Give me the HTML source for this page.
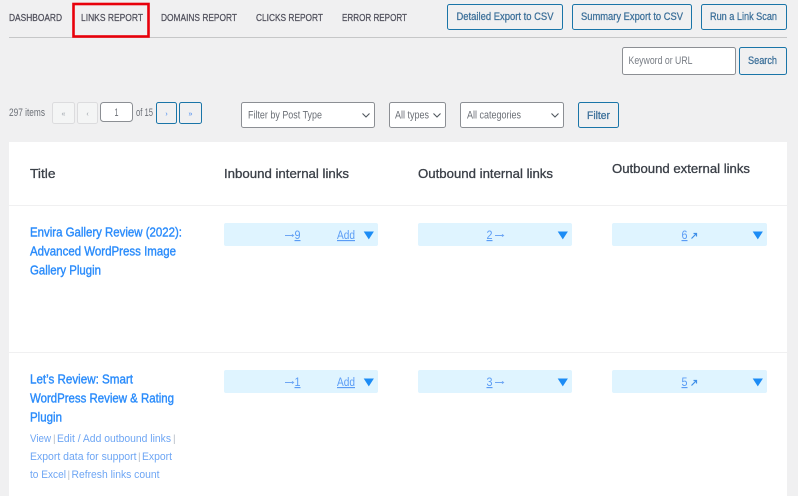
<!DOCTYPE html>
<html><head><meta charset="utf-8">
<style>
html,body{margin:0;padding:0;background:#f0f0f1;width:798px;height:496px;overflow:hidden}
svg{display:block}
text{font-family:"Liberation Sans",sans-serif;}
.nav{font-size:10.3px;fill:#50505c;stroke:#50505c;stroke-width:.25}
.btn{font-size:10.6px;fill:#3b6f99;stroke:#3b6f99;stroke-width:.25}
.ph{font-size:10.6px;fill:#777c84}
.sel{font-size:10.6px;fill:#6b6f76}
.th{font-size:12.8px;fill:#3a3f47;stroke:#3a3f47;stroke-width:.3}
.tt{font-size:13px;fill:#2b8cfb;stroke:#2b8cfb;stroke-width:.4}
.lk{font-size:11.4px;fill:#6ea6f4}
.sp{font-size:10px;fill:#b5bcc6}
.num{font-size:11.5px;fill:#5a9cf5;text-decoration:underline}
</style></head><body>
<svg width="798" height="496" viewBox="0 0 798 496" xmlns="http://www.w3.org/2000/svg">
<rect width="798" height="496" fill="#f0f0f1"/>
<!-- nav -->
<text class="nav" x="9" y="21" textLength="53" lengthAdjust="spacingAndGlyphs">DASHBOARD</text>
<text class="nav" x="81" y="21" textLength="62" lengthAdjust="spacingAndGlyphs">LINKS REPORT</text>
<text class="nav" x="161" y="21" textLength="76" lengthAdjust="spacingAndGlyphs">DOMAINS REPORT</text>
<text class="nav" x="256" y="21" textLength="67" lengthAdjust="spacingAndGlyphs">CLICKS REPORT</text>
<text class="nav" x="342" y="21" textLength="65" lengthAdjust="spacingAndGlyphs">ERROR REPORT</text>
<rect x="9" y="37" width="778" height="1" fill="#c6c7c8"/>
<rect x="73.5" y="4" width="75" height="32.5" fill="none" stroke="#e8000b" stroke-width="2.6"/>
<!-- top buttons -->
<g fill="#f0f0f1" stroke="#1a75a8" stroke-width="1">
<rect x="447.5" y="4.5" width="115" height="25" rx="2"/>
<rect x="572.5" y="4.5" width="119" height="25" rx="2"/>
<rect x="701.5" y="4.5" width="85" height="25" rx="2"/>
<rect x="739.5" y="47.5" width="47" height="27" rx="2"/>
<rect x="578.5" y="102.5" width="40" height="25" rx="2"/>
</g>
<text class="btn" x="456.5" y="20" textLength="97" lengthAdjust="spacingAndGlyphs">Detailed Export to CSV</text>
<text class="btn" x="581" y="20" textLength="102" lengthAdjust="spacingAndGlyphs">Summary Export to CSV</text>
<text class="btn" x="710" y="20" textLength="67" lengthAdjust="spacingAndGlyphs">Run a Link Scan</text>
<text class="btn" x="748" y="64" textLength="29" lengthAdjust="spacingAndGlyphs">Search</text>
<text class="btn" x="587" y="119" textLength="23" lengthAdjust="spacingAndGlyphs">Filter</text>
<!-- search input -->
<rect x="622.5" y="47.5" width="113" height="27" rx="2" fill="#fff" stroke="#8c8f94"/>
<text class="ph" x="628.5" y="64" textLength="64" lengthAdjust="spacingAndGlyphs">Keyword or URL</text>
<!-- pagination -->
<text class="sel" x="9" y="116" textLength="36" lengthAdjust="spacingAndGlyphs">297 items</text>
<rect x="52.5" y="102.5" width="22" height="21" rx="2" fill="#f4f5f5" stroke="#dcdcde"/>
<rect x="77.5" y="102.5" width="20" height="21" rx="2" fill="#f4f5f5" stroke="#dcdcde"/>
<text x="63.5" y="116" font-size="7" fill="#9aa0a8" text-anchor="middle">«</text>
<text x="87.5" y="116" font-size="7" fill="#9aa0a8" text-anchor="middle">‹</text>
<rect x="100.5" y="102.5" width="32" height="19" rx="3" fill="#fff" stroke="#8c8f94"/>
<text class="sel" x="114.5" y="116" textLength="4" lengthAdjust="spacingAndGlyphs">1</text>
<text class="sel" x="136" y="116" textLength="17" lengthAdjust="spacingAndGlyphs">of 15</text>
<rect x="156.5" y="102.5" width="20" height="21" rx="2" fill="#f0f0f1" stroke="#1a75a8"/>
<rect x="179.5" y="102.5" width="22" height="21" rx="2" fill="#f0f0f1" stroke="#1a75a8"/>
<text x="166.5" y="116" font-size="7" fill="#3f84ee" text-anchor="middle">›</text>
<text x="190.5" y="116" font-size="7" fill="#3f84ee" text-anchor="middle">»</text>
<!-- selects -->
<g fill="#fff" stroke="#8c8f94">
<rect x="241.5" y="102.5" width="133" height="25" rx="2"/>
<rect x="389.5" y="102.5" width="56" height="25" rx="2"/>
<rect x="460.5" y="102.5" width="103" height="25" rx="2"/>
</g>
<text class="sel" x="248" y="118.5" textLength="74" lengthAdjust="spacingAndGlyphs">Filter by Post Type</text>
<text class="sel" x="395" y="118.5" textLength="34" lengthAdjust="spacingAndGlyphs">All types</text>
<text class="sel" x="467" y="118.5" textLength="54" lengthAdjust="spacingAndGlyphs">All categories</text>
<g fill="none" stroke="#50575e" stroke-width="1.1">
<path d="M362.5 113.5l3.5 3.5 3.5-3.5"/>
<path d="M433.5 113.5l3.5 3.5 3.5-3.5"/>
<path d="M551.5 113.5l3.5 3.5 3.5-3.5"/>
</g>
<!-- table -->
<rect x="9" y="142" width="778" height="354" fill="#fff"/>
<rect x="9" y="205" width="778" height="1" fill="#f0f0f1"/>
<rect x="9" y="352" width="778" height="1" fill="#f0f0f1"/>
<text class="th" x="30" y="178" textLength="25.5" lengthAdjust="spacingAndGlyphs">Title</text>
<text class="th" x="224" y="178" textLength="125" lengthAdjust="spacingAndGlyphs">Inbound internal links</text>
<text class="th" x="418" y="178" textLength="135" lengthAdjust="spacingAndGlyphs">Outbound internal links</text>
<text class="th" x="612" y="173" textLength="138" lengthAdjust="spacingAndGlyphs">Outbound external links</text>
<!-- row 1 -->
<text class="tt" x="30" y="236.5" textLength="152" lengthAdjust="spacingAndGlyphs">Envira Gallery Review (2022):</text>
<text class="tt" x="30" y="255.5" textLength="146" lengthAdjust="spacingAndGlyphs">Advanced WordPress Image</text>
<text class="tt" x="30" y="274.5" textLength="71" lengthAdjust="spacingAndGlyphs">Gallery Plugin</text>
<g fill="#dff4ff">
<rect x="224" y="223" width="154" height="23" rx="2"/>
<rect x="418" y="223" width="154" height="23" rx="2"/>
<rect x="612" y="223" width="155" height="23" rx="2"/>
<rect x="224" y="370" width="154" height="23" rx="2"/>
<rect x="418" y="370" width="154" height="23" rx="2"/>
<rect x="612" y="370" width="155" height="23" rx="2"/>
</g>
<g fill="#1c8cf5">
<path d="M363.7 231.5h10.2l-5.1 7.9z"/>
<path d="M557.7 231.5h10.2l-5.1 7.9z"/>
<path d="M752.7 231.5h10.2l-5.1 7.9z"/>
<path d="M363.7 378.5h10.2l-5.1 7.9z"/>
<path d="M557.7 378.5h10.2l-5.1 7.9z"/>
<path d="M752.7 378.5h10.2l-5.1 7.9z"/>
</g>
<g fill="none" stroke="#6ea6f4" stroke-width=".9">
<path d="M285 235.5h8.5M292 234.3l1.6 1.2-1.6 1.2"/>
<path d="M495 235.5h8.5M502 234.3l1.6 1.2-1.6 1.2"/>
<path d="M382 382" />
<path d="M285 382.5h8.5M292 381.3l1.6 1.2-1.6 1.2"/>
<path d="M495 382.5h8.5M502 381.3l1.6 1.2-1.6 1.2"/>
</g>
<g fill="none" stroke="#3f8fe8" stroke-width="1.2">
<path d="M691.5 238.5l4.5-4.5M693.5 233.5h3v3"/>
<path d="M691.5 385.5l4.5-4.5M693.5 380.5h3v3"/>
</g>
<text class="num" x="294.5" y="239" textLength="6" lengthAdjust="spacingAndGlyphs">9</text>
<text class="num" x="337" y="239" textLength="18" lengthAdjust="spacingAndGlyphs">Add</text>
<text class="num" x="486.5" y="239" textLength="6" lengthAdjust="spacingAndGlyphs">2</text>
<text class="num" x="681.5" y="239" textLength="6" lengthAdjust="spacingAndGlyphs">6</text>
<!-- row 2 -->
<text class="tt" x="30" y="383.5" textLength="103" lengthAdjust="spacingAndGlyphs">Let’s Review: Smart</text>
<text class="tt" x="30" y="402.5" textLength="144" lengthAdjust="spacingAndGlyphs">WordPress Review &amp; Rating</text>
<text class="tt" x="30" y="421.5" textLength="32" lengthAdjust="spacingAndGlyphs">Plugin</text>
<text class="num" x="294.5" y="386" textLength="6" lengthAdjust="spacingAndGlyphs">1</text>
<text class="num" x="337" y="386" textLength="18" lengthAdjust="spacingAndGlyphs">Add</text>
<text class="num" x="486.5" y="386" textLength="6" lengthAdjust="spacingAndGlyphs">3</text>
<text class="num" x="681.5" y="386" textLength="6" lengthAdjust="spacingAndGlyphs">5</text>
<text class="lk" x="30" y="442" textLength="21" lengthAdjust="spacingAndGlyphs">View</text>
<text class="sp" x="53" y="442">|</text>
<text class="lk" x="57" y="442" textLength="114" lengthAdjust="spacingAndGlyphs">Edit / Add outbound links</text>
<text class="sp" x="173" y="442">|</text>
<text class="lk" x="30" y="460" textLength="106.5" lengthAdjust="spacingAndGlyphs">Export data for support</text>
<text class="sp" x="138" y="460">|</text>
<text class="lk" x="142" y="460" textLength="30" lengthAdjust="spacingAndGlyphs">Export</text>
<text class="lk" x="30" y="478" textLength="36" lengthAdjust="spacingAndGlyphs">to Excel</text>
<text class="sp" x="67.5" y="478">|</text>
<text class="lk" x="71.5" y="478" textLength="88" lengthAdjust="spacingAndGlyphs">Refresh links count</text>
</svg>
</body></html>
